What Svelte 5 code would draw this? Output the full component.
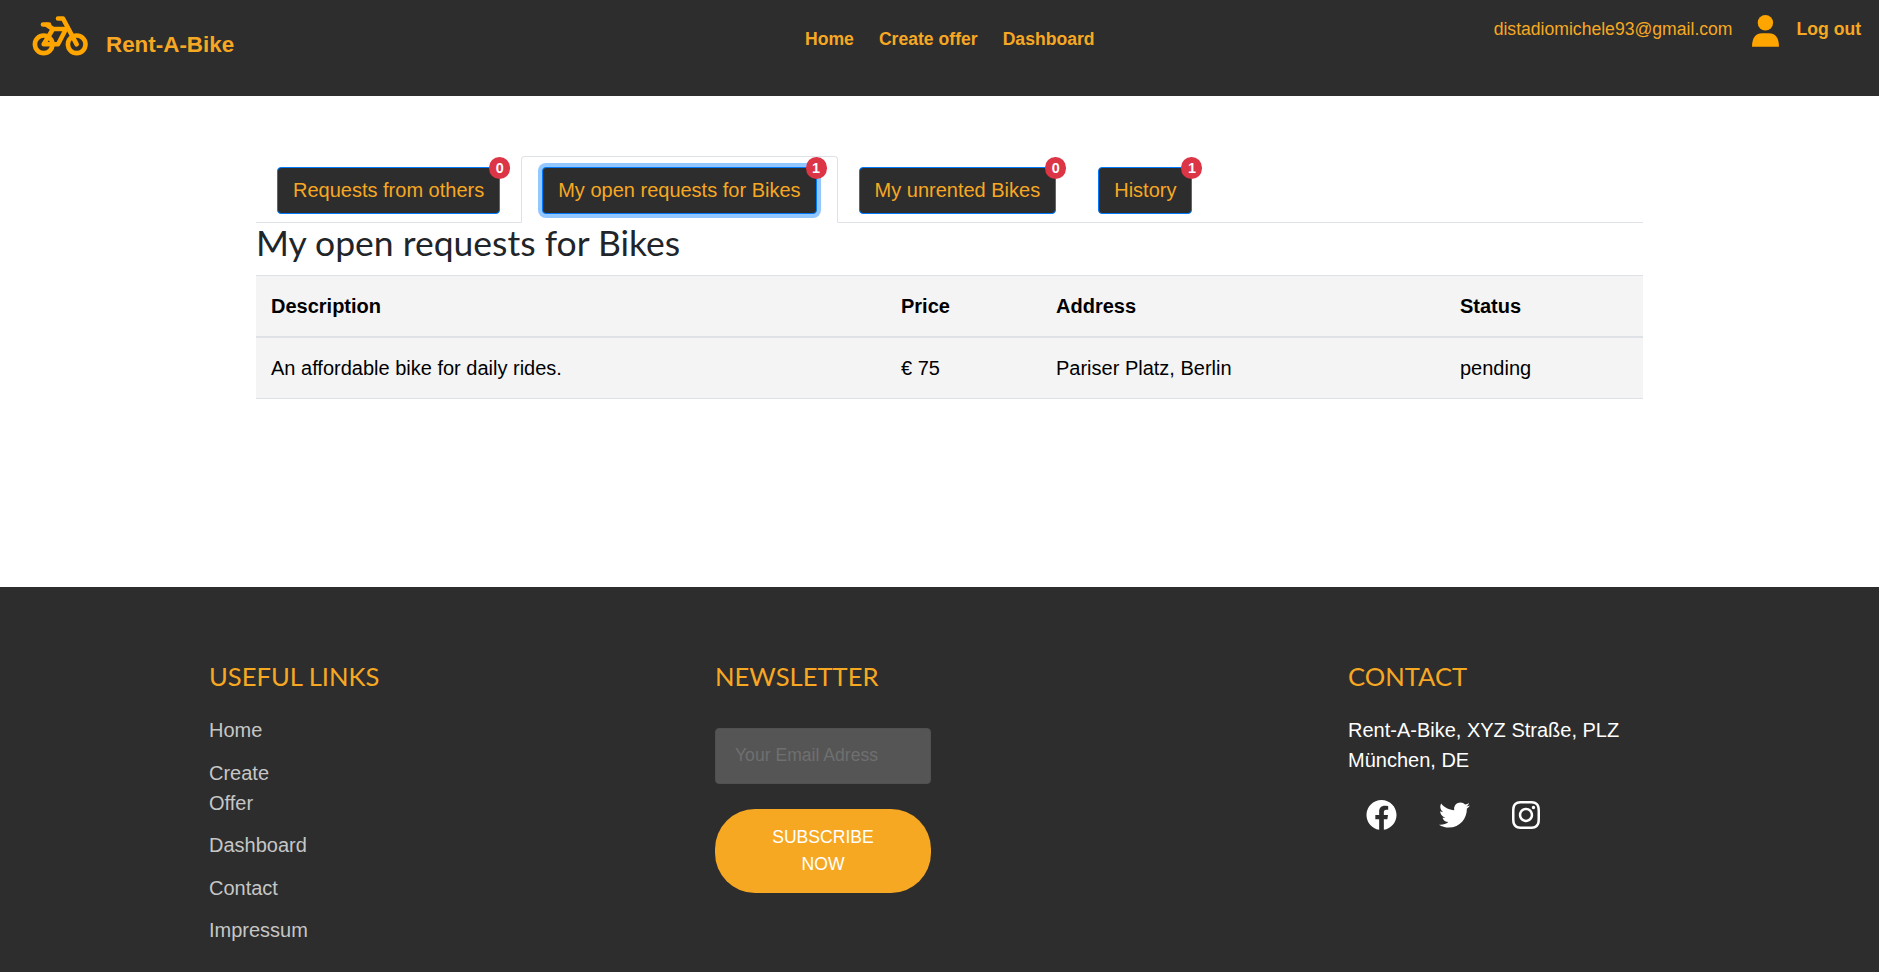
<script>
  const tabs = [
    { label: 'Requests from others', count: 0 },
    { label: 'My open requests for Bikes', count: 1, active: true },
    { label: 'My unrented Bikes', count: 0 },
    { label: 'History', count: 1 },
  ]
  const links = ['Home', 'Create Offer', 'Dashboard', 'Contact', 'Impressum']
</script>

<header class="topbar">
  <a class="brand" href="#home">
    <svg class="bike" viewBox="0 0 66 48" aria-hidden="true">
      <circle cx="15.7" cy="32.3" r="8.800" />
      <circle cx="48.7" cy="32.3" r="8.800" />
      <path d="M30 6.500H35L48.700 32.300" />
      <path d="M15 12.500H21" />
      <path d="M19 13L25 17H38L30 32.300H15.700L25 17" />
    </svg>
    <span>Rent-A-Bike</span>
  </a>
  <nav class="mainnav">
    <a href="#home">Home</a>
    <a href="#create">Create offer</a>
    <a href="#dashboard">Dashboard</a>
  </nav>
  <div class="account">
    <span class="email">distadiomichele93@gmail.com</span>
    <svg class="user" viewBox="0 0 27 32" aria-hidden="true">
      <circle cx="13.400" cy="7.700" r="7.700" />
      <path d="M0 31.700C0 22.500 4 18.300 10 18.300H17C23 18.300 27 22.500 27 31.700z" />
    </svg>
    <a class="logout" href="#logout">Log out</a>
  </div>
</header>

<main class="content">
  <ul class="tabs">
    {#each tabs as tab}
      <li class="tab" class:active={tab.active}>
        <button class="tabbtn" class:focus={tab.active}>
          {tab.label}
          <span class="badge">{tab.count}</span>
        </button>
      </li>
    {/each}
  </ul>
  <h2>My open requests for Bikes</h2>
  <table>
    <colgroup>
      <col style="width: 630px" />
      <col style="width: 155px" />
      <col style="width: 404px" />
      <col />
    </colgroup>
    <thead>
      <tr>
        <th>Description</th>
        <th>Price</th>
        <th>Address</th>
        <th>Status</th>
      </tr>
    </thead>
    <tbody>
      <tr>
        <td>An affordable bike for daily rides.</td>
        <td>€ 75</td>
        <td>Pariser Platz, Berlin</td>
        <td>pending</td>
      </tr>
    </tbody>
  </table>
</main>

<footer class="footer">
  <section class="links">
    <h4>USEFUL LINKS</h4>
    <ul>
      {#each links as link}
        <li><a href="#link">{link}</a></li>
      {/each}
    </ul>
  </section>
  <section class="news">
    <h4>NEWSLETTER</h4>
    <input type="email" placeholder="Your Email Adress" />
    <button class="subscribe">SUBSCRIBE NOW</button>
  </section>
  <section class="contact">
    <h4>CONTACT</h4>
    <p>Rent-A-Bike, XYZ Straße, PLZ<br />München, DE</p>
    <div class="social">
      <svg class="fb" viewBox="0 0 512 512" aria-hidden="true"><path d="M504 256C504 119 393 8 256 8S8 119 8 256c0 123.78 90.69 226.38 209.25 245V327.69h-63V256h63v-54.64c0-62.15 37-96.48 93.67-96.48 27.14 0 55.52 4.84 55.52 4.84v61h-31.28c-30.8 0-40.41 19.12-40.41 38.73V256h68.78l-11 71.69h-57.78V501C413.31 482.38 504 379.78 504 256z"/></svg>
      <svg class="tw" viewBox="0 0 512 512" aria-hidden="true"><path d="M459.37 151.716c.325 4.548.325 9.097.325 13.645 0 138.72-105.583 298.558-298.558 298.558-59.452 0-114.68-17.219-161.137-47.106 8.447.974 16.568 1.299 25.34 1.299 49.055 0 94.213-16.568 130.274-44.832-46.132-.975-84.792-31.188-98.112-72.772 6.498.974 12.995 1.624 19.818 1.624 9.421 0 18.843-1.3 27.614-3.573-48.081-9.747-84.143-51.98-84.143-102.985v-1.299c13.969 7.797 30.214 12.67 47.431 13.319-28.264-18.843-46.781-51.005-46.781-87.391 0-19.492 5.197-37.36 14.294-52.954 51.655 63.675 129.3 105.258 216.365 109.807-1.624-7.797-2.599-15.918-2.599-24.04 0-57.828 46.782-104.934 104.934-104.934 30.213 0 57.502 12.67 76.67 33.137 23.715-4.548 46.456-13.32 66.599-25.34-7.798 24.366-24.366 45.457-46.781 58.126 21.116-2.273 41.584-8.122 60.426-16.243-14.292 20.791-32.161 39.308-52.628 54.253z"/></svg>
      <svg class="ig" viewBox="0 0 448 512" aria-hidden="true"><path d="M224.1 141c-63.6 0-114.9 51.3-114.9 114.9s51.3 114.9 114.9 114.9S339 319.5 339 255.9 287.7 141 224.1 141zm0 189.6c-41.1 0-74.7-33.5-74.7-74.7s33.5-74.7 74.7-74.7 74.7 33.5 74.7 74.7-33.6 74.7-74.7 74.7zm146.4-194.3c0 14.9-12 26.8-26.8 26.8-14.9 0-26.8-12-26.8-26.8s12-26.8 26.8-26.8 26.8 12 26.8 26.8zm76.1 27.2c-1.7-35.9-9.9-67.7-36.2-93.9-26.2-26.2-58-34.4-93.9-36.2-37-2.1-147.9-2.1-184.9 0-35.8 1.7-67.6 9.9-93.9 36.1s-34.4 58-36.2 93.9c-2.1 37-2.1 147.9 0 184.9 1.7 35.9 9.9 67.7 36.2 93.9s58 34.4 93.9 36.2c37 2.1 147.9 2.1 184.9 0 35.9-1.7 67.7-9.9 93.9-36.2 26.2-26.2 34.4-58 36.2-93.9 2.1-37 2.1-147.8 0-184.8zM398.8 388c-7.8 19.6-22.9 34.7-42.6 42.6-29.5 11.7-99.5 9-132.1 9s-102.7 2.6-132.1-9c-19.6-7.8-34.7-22.9-42.6-42.6-11.7-29.5-9-99.5-9-132.1s-2.6-102.7 9-132.1c7.8-19.6 22.9-34.7 42.6-42.6 29.5-11.7 99.5-9 132.1-9s102.7-2.6 132.1 9c19.6 7.8 34.7 22.9 42.6 42.6 11.7 29.5 9 99.5 9 132.1s2.7 102.7-9 132.1z"/></svg>
    </div>
  </section>
</footer>

<style>
  :global(body) {
    margin: 0;
    font-family: "Liberation Sans", Arial, sans-serif;
    background: #fff;
  }

  a {
    text-decoration: none;
    color: inherit;
  }

  .topbar {
    height: 96px;
    box-sizing: border-box;
    background: #2d2d2d;
    color: #f7a823;
    display: grid;
    grid-template-columns: 778px auto 1fr;
    padding: 0 18px 0 28px;
  }

  .brand {
    display: flex;
    align-items: flex-start;
    gap: 12px;
    padding-top: 12px;
    font-size: 22.4px;
    font-weight: 700;
    line-height: 66px;
  }

  .bike {
    width: 66px;
    height: 48px;
    fill: none;
    stroke: #ffa500;
    stroke-width: 4.6;
    stroke-linecap: round;
    stroke-linejoin: round;
  }

  .mainnav {
    display: flex;
    gap: 25px;
    padding-top: 29px;
    font-size: 17.6px;
    font-weight: 700;
    line-height: 20px;
    align-items: flex-start;
    transform: translateX(-1px);
  }

  .account {
    display: flex;
    justify-content: flex-end;
    align-items: flex-start;
    padding-top: 15px;
  }

  .email {
    font-size: 17.6px;
    line-height: 28px;
  }

  .user {
    width: 27px;
    height: 32px;
    margin: 0 18px 0 19px;
    fill: #ffa500;
  }

  .logout {
    font-size: 17.6px;
    font-weight: 700;
    line-height: 28px;
  }

  .content {
    height: 491px;
    box-sizing: border-box;
    padding: 60px 236px 0 256px;
    color: #212529;
  }

  .tabs {
    list-style: none;
    margin: 0;
    padding: 0;
    display: flex;
    border-bottom: 1px solid #dee2e6;
    height: 66px;
  }

  .tab {
    box-sizing: border-box;
    height: 67px;
    padding: 10px 20px 0;
    border: 1px solid transparent;
    border-radius: 4px 4px 0 0;
  }

  .tab.active {
    border-color: #dee2e6 #dee2e6 #fff;
    background: #fff;
  }

  .tabbtn {
    position: relative;
    display: block;
    box-sizing: border-box;
    height: 47px;
    padding: 8px 15px;
    background: #2d2d2d;
    color: #f7a823;
    border: 1px solid #007bff;
    border-radius: 4px;
    font: 20px/28.8px "Liberation Sans", Arial, sans-serif;
    white-space: nowrap;
  }

  .tabbtn.focus {
    box-shadow: 0 0 0 4px rgba(38, 143, 255, 0.5);
  }

  .badge {
    position: absolute;
    top: -11px;
    right: -11px;
    min-width: 21px;
    height: 22px;
    border-radius: 11px;
    background: #dc3545;
    color: #fff;
    font-size: 14.4px;
    font-weight: 700;
    line-height: 22px;
    text-align: center;
  }

  h2 {
    margin: 0;
    font: 400 35.5px/40px Lato, sans-serif;
    color: #212529;
    height: 52px;
  }

  table {
    width: 100%;
    border-collapse: collapse;
    table-layout: fixed;
    background: #f4f4f4;
    color: #000;
    font-size: 20px;
  }

  th,
  td {
    text-align: left;
    padding: 1px 15px 0;
    height: 61px;
    box-sizing: border-box;
    border-top: 1px solid #dee2e6;
  }

  th {
    font-weight: 700;
    border-bottom: 2px solid #dee2e6;
  }

  td {
    height: 62px;
    border-top: 0;
    border-bottom: 1px solid #dee2e6;
  }

  .footer {
    height: 385px;
    box-sizing: border-box;
    overflow: hidden;
    background: #2d2d2d;
    display: grid;
    grid-template-columns: 506px 633px 1fr;
    padding: 73px 0 0 209px;
  }

  h4 {
    margin: 0 0 23px;
    font: 400 25.6px/32px Lato, sans-serif;
    color: #f7a823;
  }

  .links ul {
    list-style: none;
    margin: 0;
    padding: 0;
    width: 104px;
    font-size: 20px;
    line-height: 30px;
    color: #c6c6c6;
  }

  .links li {
    margin-bottom: 12.500px;
  }

  .news input {
    display: block;
    box-sizing: border-box;
    width: 216px;
    height: 56px;
    padding: 0 19px 2px;
    margin: 36px 0 25px;
    background: #555;
    border: 1px solid #505050;
    border-radius: 4px;
    font: 17.6px "Liberation Sans", Arial, sans-serif;
  }

  .news input::placeholder {
    color: #6f6f6f;
    opacity: 1;
  }

  .subscribe {
    display: block;
    width: 216px;
    height: 84px;
    padding: 0 40px;
    border: 0;
    border-radius: 40px;
    background: #f7a823;
    color: #fff;
    font: 17.6px/27px "Liberation Sans", Arial, sans-serif;
  }

  .contact p {
    margin: 0;
    font-size: 20px;
    line-height: 30px;
    color: #fff;
  }

  .social {
    display: flex;
    align-items: center;
    gap: 42px;
    padding: 24px 0 0 18px;
  }

  .social svg {
    fill: #fff;
    height: 32px;
  }

  .fb {
    width: 31px;
  }

  .tw {
    width: 31px;
  }

  .ig {
    width: 28px;
  }
</style>
